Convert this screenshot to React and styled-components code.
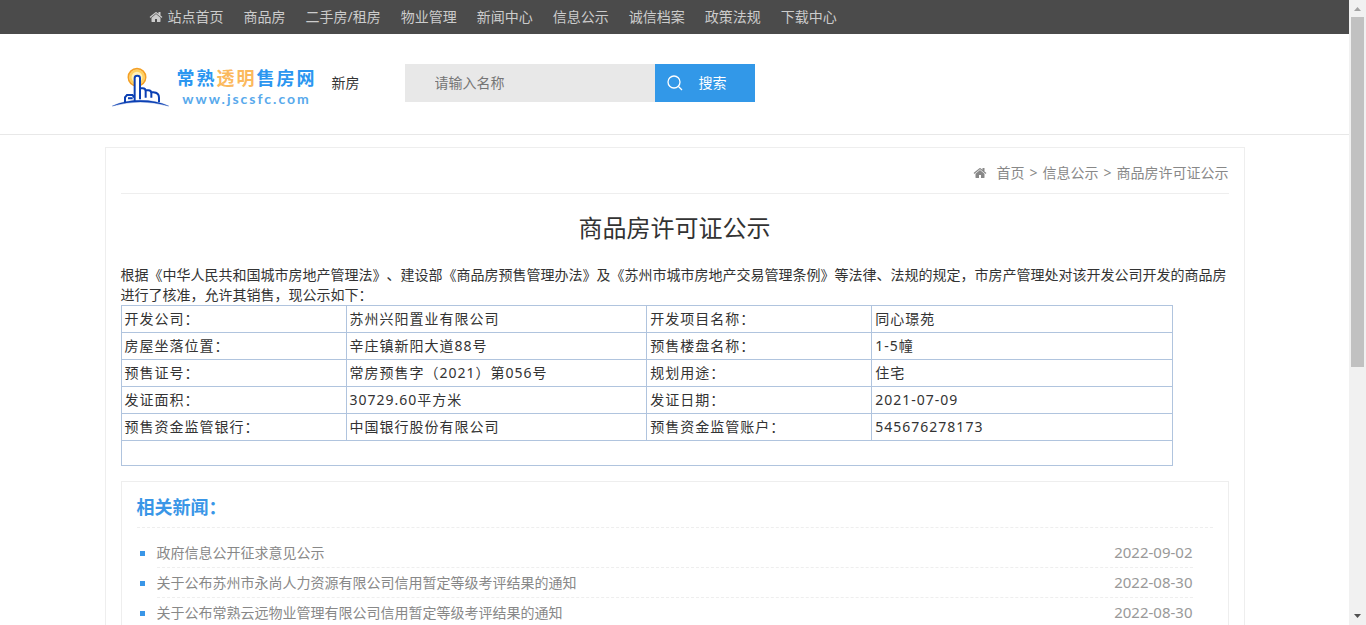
import React from "react"
import styled, { createGlobalStyle } from "styled-components"

const GlobalStyle = createGlobalStyle`
  * {
    box-sizing: border-box;
  }
  body {
    margin: 0;
    background: #fff;
    color: #333;
    font-family: "Noto Sans", "Noto Sans CJK SC", sans-serif;
    font-size: 14px;
    line-height: 20px;
    text-spacing-trim: space-all;
  }
  a {
    color: inherit;
    text-decoration: none;
  }
`

//page shell
const Shell = styled.div`
  display: flex;
  height: 100vh;
`

const Scroller = styled.div`
  flex: 1;
  min-width: 0;
  overflow-y: auto;
  scrollbar-width: none;
`

const Container = styled.div`
  max-width: 1140px;
  margin: 0 auto;
`

const ScrollTrack = styled.div`
  display: flex;
  flex-direction: column;
  align-items: center;
  width: 17px;
  background: #f1f1f1;
  svg {
    display: block;
    flex: none;
  }
`

const ScrollThumb = styled.div`
  flex: none;
  width: 13px;
  height: 56%;
  margin-bottom: auto;
  background: #c1c1c1;
`

//top navigation
const TopBar = styled.nav`
  background: #4b4b4b;
  color: #ccc;
`

const NavList = styled.ul`
  display: flex;
  margin: 0;
  padding: 0 34px;
  list-style: none;
  a {
    display: flex;
    align-items: center;
    gap: 5px;
    height: 34px;
    padding: 0 10px;
    white-space: nowrap;
  }
`

//header
const Header = styled.header`
  border-bottom: 1px solid #e8e8e8;
`

const HeaderRow = styled(Container)`
  display: flex;
  align-items: center;
  height: 100px;
  padding: 0 7px 2px;
`

const Logo = styled.a`
  display: flex;
  align-items: center;
  gap: 7px;
  height: 42px;
  margin-top: 8px;
`

const LogoText = styled.span`
  display: flex;
  flex-direction: column;
  align-items: center;
`

const LogoName = styled.strong`
  color: #2b96f0;
  font-size: 18px;
  line-height: 24px;
  letter-spacing: 2px;
  em {
    color: #fbb95d;
    font-style: normal;
  }
`

const LogoDomain = styled.span`
  color: #58a9ec;
  font-family: Lato, "Noto Sans", sans-serif;
  font-size: 14px;
  font-weight: 700;
  line-height: 18px;
  letter-spacing: 2px;
`

const Section = styled.span`
  margin: 0 45px 0 15px;
`

const SearchForm = styled.form`
  display: flex;
  height: 38px;
`

const SearchInput = styled.input`
  width: 250px;
  padding: 0 30px;
  border: 0;
  background: #e8e8e8;
  color: #333;
  font: inherit;
  &::placeholder {
    color: #757575;
  }
`

const SearchButton = styled.button`
  display: flex;
  align-items: center;
  gap: 16px;
  width: 100px;
  padding: 0 12px;
  border: 0;
  background: #3298e8;
  color: #fff;
  font: inherit;
`

//content
const Panel = styled(Container).attrs({ as: "main" })`
  display: block;
  margin-top: 12px;
  padding: 0 15px 15px;
  border: 1px solid #eee;
`

const Breadcrumb = styled.nav`
  display: flex;
  justify-content: flex-end;
  align-items: center;
  gap: 5px;
  height: 46px;
  padding-top: 4px;
  border-bottom: 1px solid #eee;
  color: #888;
  svg {
    margin-right: 4px;
  }
`

const Title = styled.h1`
  margin: 16px 0 19px;
  font-size: 24px;
  font-weight: 400;
  line-height: 36px;
  text-align: center;
`

const Intro = styled.p`
  margin: 0;
`

const PermitTable = styled.table`
  width: 95%;
  table-layout: fixed;
  border-collapse: collapse;
  letter-spacing: 1px;
  th,
  td {
    height: 27px;
    padding: 0 3px;
    border: 1px solid #b0c4de;
    font-weight: 400;
    text-align: left;
  }
  th {
    width: 225px;
  }
  td[colspan] {
    height: 25px;
  }
`

const Related = styled.section`
  margin-top: 15px;
  padding: 0 15px 440px;
  border: 1px solid #eee;
`

const RelatedTitle = styled.h2`
  margin: 0;
  padding: 10px 0 5px;
  border-bottom: 1px dashed #eee;
  color: #3996e7;
  font-size: 18px;
  font-weight: 700;
  line-height: 30px;
`

const NewsList = styled.ul`
  margin: 0;
  padding: 10px 20px 0 3px;
  list-style: none;
`

const NewsItem = styled.li`
  display: flex;
  align-items: center;
  gap: 12px;
  &::before {
    content: "";
    width: 5px;
    height: 5px;
    background: #3996e7;
  }
`

const NewsRow = styled.div`
  flex: 1;
  display: flex;
  justify-content: space-between;
  height: 30px;
  border-bottom: 1px dashed #eee;
  color: #888;
  line-height: 30px;
  time {
    color: #999;
    font-size: 15px;
    line-height: 28px;
  }
`

const HomeIcon = () => (
  <svg width="14" height="14" viewBox="0 0 1792 1792" fill="currentColor" aria-hidden="true">
    <path d="M1472 992v480q0 26-19 45t-45 19h-384v-384h-256v384h-384q-26 0-45-19t-19-45v-480q0-1 .5-3t.5-3l575-474 575 474q1 2 1 6zm223-69l-62 74q-8 9-21 11h-3q-13 0-21-7l-692-577-692 577q-12 8-24 7-13-2-21-11l-62-74q-8-10-7-23.5t11-21.5l719-599q32-26 76-26t76 26l244 204v-195q0-14 9-23t23-9h192q14 0 23 9t9 23v408l219 182q10 8 11 21.5t-7 23.5z" />
  </svg>
)

const LogoMark = () => (
  <svg width="58" height="42" viewBox="12 12 174 126" fill="none" aria-hidden="true">
    <circle cx="87" cy="46" r="22" fill="#fff0b8" />
    <circle cx="87" cy="46" r="20" stroke="#ffd160" strokeWidth="7" />
    <circle cx="87" cy="46" r="26" stroke="#f4a024" strokeWidth="5" />
    <path
      d="M80 119V48q0-7 8-7t8 7v31h10q7 0 8 6h9q7 0 8 6h9q12 2 13 14v17q-35-9-73-3z"
      fill="#fff"
    />
    <path
      d="M51 120v-14l6-7h16l7 9M80 119V48q0-7 8-7t8 7v64M96 79h8q9 0 9 9v19M113 85h8q9 0 9 9v13M130 91h6q17 1 17 16v14M60 109h14"
      stroke="#0b40b4"
      strokeWidth="6"
    />
    <path d="M13 132q36-17 84-17t85 17q-45-12-85-12t-84 12z" fill="#0b40b4" stroke="#0b40b4" />
  </svg>
)

const SearchIcon = () => (
  <svg width="16" height="16" viewBox="0 0 16 16" fill="none" stroke="#fff" aria-hidden="true">
    <circle cx="7" cy="7" r="6" strokeWidth="1.3" />
    <path d="M11.5 11.5l3.5 3.5" strokeWidth="1.3" />
  </svg>
)

const navItems = [
  "站点首页",
  "商品房",
  "二手房/租房",
  "物业管理",
  "新闻中心",
  "信息公示",
  "诚信档案",
  "政策法规",
  "下载中心"
]

const permitRows = [
  ["开发公司：", "苏州兴阳置业有限公司", "开发项目名称：", "同心璟苑"],
  ["房屋坐落位置：", "辛庄镇新阳大道88号", "预售楼盘名称：", "1-5幢"],
  ["预售证号：", "常房预售字（2021）第056号", "规划用途：", "住宅"],
  ["发证面积：", "30729.60平方米", "发证日期：", "2021-07-09"],
  ["预售资金监管银行：", "中国银行股份有限公司", "预售资金监管账户：", "545676278173"]
]

const news = [
  { title: "政府信息公开征求意见公示", date: "2022-09-02" },
  {
    title: "关于公布苏州市永尚人力资源有限公司信用暂定等级考评结果的通知",
    date: "2022-08-30"
  },
  {
    title: "关于公布常熟云远物业管理有限公司信用暂定等级考评结果的通知",
    date: "2022-08-30"
  }
]

const App = () => (
  <Shell>
    <GlobalStyle />
    <Scroller>
      <TopBar>
        <Container>
          <NavList>
            {navItems.map((item, i) => (
              <li key={item}>
                <a href="/">
                  {i === 0 && <HomeIcon />}
                  {item}
                </a>
              </li>
            ))}
          </NavList>
        </Container>
      </TopBar>

      <Header>
        <HeaderRow>
          <Logo href="/">
            <LogoMark />
            <LogoText>
              <LogoName>
                常熟<em>透明</em>售房网
              </LogoName>
              <LogoDomain>www.jscsfc.com</LogoDomain>
            </LogoText>
          </Logo>
          <Section>新房</Section>
          <SearchForm onSubmit={e => e.preventDefault()}>
            <SearchInput type="text" aria-label="请输入名称" placeholder="请输入名称" />
            <SearchButton type="submit">
              <SearchIcon />
              搜索
            </SearchButton>
          </SearchForm>
        </HeaderRow>
      </Header>

      <Panel>
        <Breadcrumb>
          <HomeIcon />
          <a href="/">首页</a>
          <span>&gt;</span>
          <a href="/">信息公示</a>
          <span>&gt;</span>
          <a href="/">商品房许可证公示</a>
        </Breadcrumb>
        <Title>商品房许可证公示</Title>
        <Intro>
          根据《中华人民共和国城市房地产管理法》、建设部《商品房预售管理办法》及《苏州市城市房地产交易管理条例》等法律、法规的规定，市房产管理处对该开发公司开发的商品房进行了核准，允许其销售，现公示如下：
        </Intro>
        <PermitTable>
          <tbody>
            {permitRows.map(([labelA, valueA, labelB, valueB]) => (
              <tr key={labelA}>
                <th scope="row">{labelA}</th>
                <td>{valueA}</td>
                <th scope="row">{labelB}</th>
                <td>{valueB}</td>
              </tr>
            ))}
            <tr>
              <td colSpan="4" />
            </tr>
          </tbody>
        </PermitTable>
        <Related>
          <RelatedTitle>相关新闻：</RelatedTitle>
          <NewsList>
            {news.map(({ title, date }) => (
              <NewsItem key={title}>
                <NewsRow>
                  <a href="/">{title}</a>
                  <time>{date}</time>
                </NewsRow>
              </NewsItem>
            ))}
          </NewsList>
        </Related>
      </Panel>
    </Scroller>
    <ScrollTrack aria-hidden="true">
      <svg width="17" height="17" viewBox="0 0 17 17">
        <path d="M5 11l3.5-4 3.5 4z" fill="#a3a3a3" />
      </svg>
      <ScrollThumb />
      <svg width="17" height="17" viewBox="0 0 17 17">
        <path d="M5 6l3.5 4L12 6z" fill="#505050" />
      </svg>
    </ScrollTrack>
  </Shell>
)

export default App
